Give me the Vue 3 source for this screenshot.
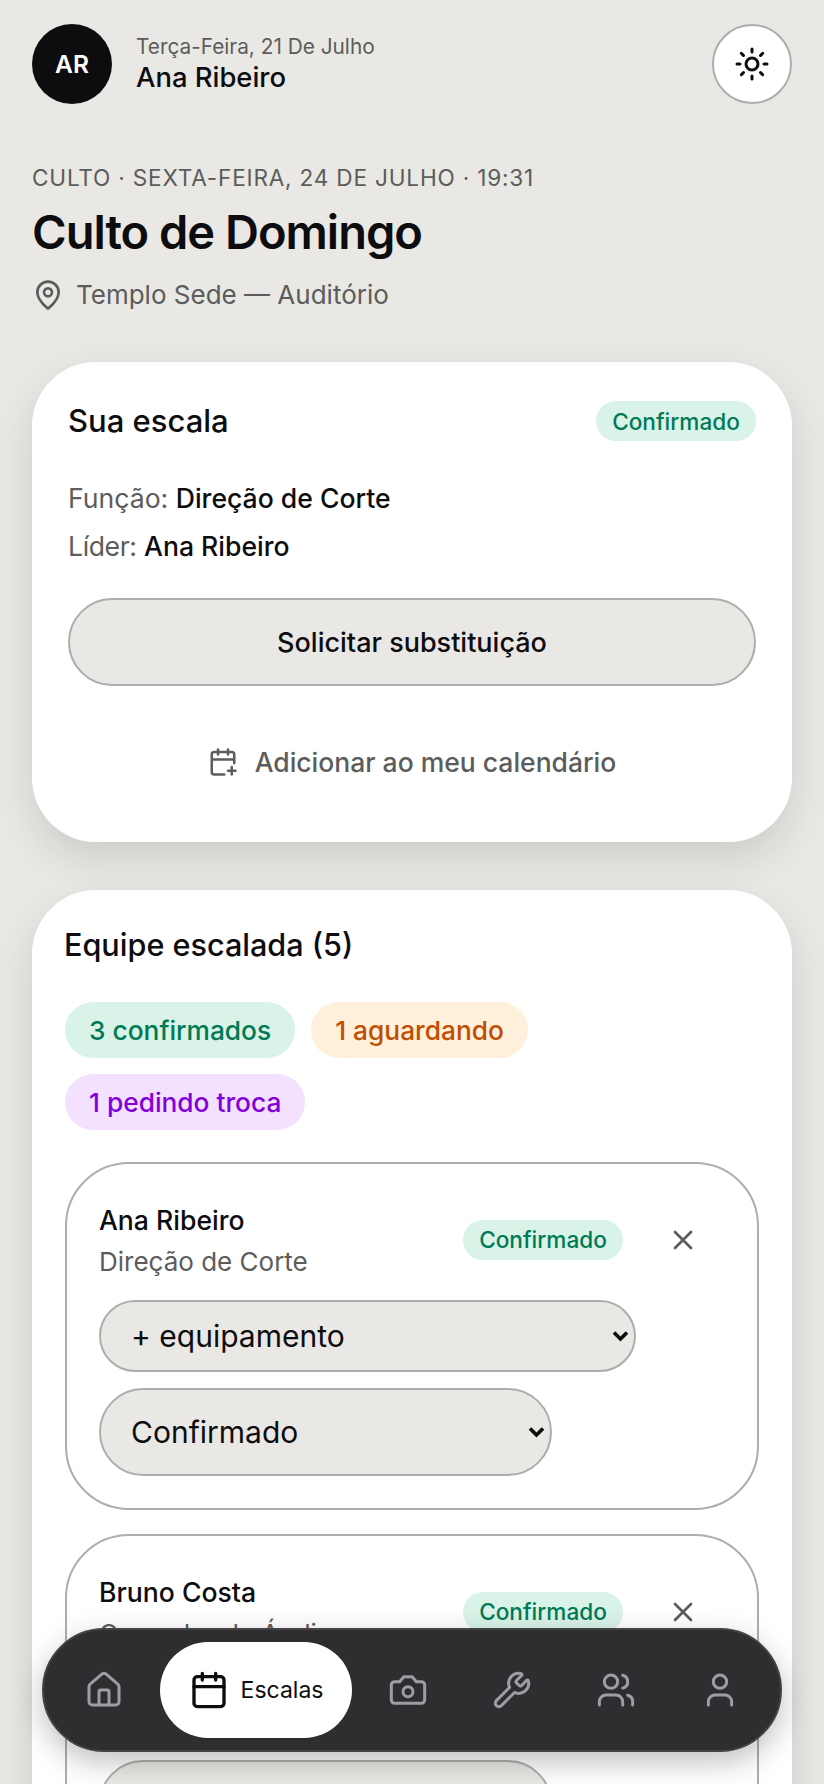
<script setup>
const team = [
  { name: 'Ana Ribeiro', role: 'Direção de Corte' },
  { name: 'Bruno Costa', role: 'Operador de Áudio' },
]
const navIcons = ['camera', 'wrench', 'users', 'user']
</script>

<template>
  <div class="page">
    <header class="top">
      <div class="who">
        <div class="avatar">AR</div>
        <div class="who-text">
          <div class="date">Terça-Feira, 21 De Julho</div>
          <div class="me">Ana Ribeiro</div>
        </div>
      </div>
      <button class="theme" type="button" aria-label="Tema">
        <svg class="ic sun" viewBox="0 0 24 24"><circle cx="12" cy="12" r="4"/><path d="M12 2v2M12 20v2m-7.07-17.07 1.41 1.41m11.32 11.32 1.41 1.41M2 12h2M20 12h2M6.34 17.66l-1.41 1.41M19.07 4.93l-1.41 1.41"/></svg>
      </button>
    </header>

    <section class="event">
      <div class="over">Culto · Sexta-Feira, 24 De Julho · 19:31</div>
      <h1>Culto de Domingo</h1>
      <div class="place">
        <svg class="ic pin" viewBox="0 0 24 24"><path d="M20 10c0 4.993-5.539 10.193-7.399 11.799a1 1 0 0 1-1.202 0C9.539 20.193 4 14.993 4 10a8 8 0 0 1 16 0"/><circle cx="12" cy="10" r="3"/></svg>
        <span>Templo Sede — Auditório</span>
      </div>
    </section>

    <section class="card mine">
      <div class="mine-head">
        <h2>Sua escala</h2>
        <span class="badge">Confirmado</span>
      </div>
      <p class="line first"><span>Função:</span> <b>Direção de Corte</b></p>
      <p class="line second"><span>Líder:</span> <b>Ana Ribeiro</b></p>
      <button class="swap" type="button">Solicitar substituição</button>
      <a class="addcal">
        <svg class="ic calplus" viewBox="0 0 24 24"><path d="M8 2v4M16 2v4M21 13V6a2 2 0 0 0-2-2H5a2 2 0 0 0-2 2v14a2 2 0 0 0 2 2h8M3 10h18M16 19h6M19 16v6"/></svg>
        <span>Adicionar ao meu calendário</span>
      </a>
    </section>

    <section class="card crew">
      <h2>Equipe escalada (5)</h2>
      <div class="pills">
        <span class="pill green">3 confirmados</span>
        <span class="pill orange">1 aguardando</span>
        <span class="pill purple">1 pedindo troca</span>
      </div>
      <div class="list">
        <article v-for="m in team" :key="m.name" class="member">
          <div class="m-head">
            <div class="m-id">
              <div class="m-name">{{ m.name }}</div>
              <div class="m-role">{{ m.role }}</div>
            </div>
            <span class="badge small">Confirmado</span>
            <button class="close" type="button" aria-label="Remover">
              <svg class="ic x" viewBox="0 0 24 24"><path d="M18 6 6 18M6 6l12 12"/></svg>
            </button>
          </div>
          <div class="selwrap gear">
            <select class="sel"><option>+ equipamento</option></select>
            <svg class="chev" viewBox="0 0 17 12"><path d="M2 2.5l6.5 6.5L15 2.5"/></svg>
          </div>
          <div class="selwrap status">
            <select class="sel"><option>Confirmado</option><option>Aguardando</option><option>Pedindo troca</option></select>
            <svg class="chev" viewBox="0 0 17 12"><path d="M2 2.5l6.5 6.5L15 2.5"/></svg>
          </div>
        </article>
      </div>
    </section>

    <nav class="nav">
      <a class="tab">
        <svg class="ic nv" viewBox="0 0 24 24"><path d="M15 21v-8a1 1 0 0 0-1-1h-4a1 1 0 0 0-1 1v8"/><path d="M3 10a2 2 0 0 1 .709-1.528l7-5.999a2 2 0 0 1 2.582 0l7 5.999A2 2 0 0 1 21 10v9a2 2 0 0 1-2 2H5a2 2 0 0 1-2-2z"/></svg>
      </a>
      <a class="tab active">
        <svg class="ic nv" viewBox="0 0 24 24"><path d="M8 2v4M16 2v4"/><rect x="3" y="4" width="18" height="18" rx="2"/><path d="M3 10h18"/></svg>
        <span>Escalas</span>
      </a>
      <a v-for="n in navIcons" :key="n" class="tab">
        <svg class="ic nv" viewBox="0 0 24 24">
          <template v-if="n === 'camera'"><path d="M14.5 4h-5L7 7H4a2 2 0 0 0-2 2v9a2 2 0 0 0 2 2h16a2 2 0 0 0 2-2V9a2 2 0 0 0-2-2h-3l-2.5-3z"/><circle cx="12" cy="13" r="3"/></template>
          <template v-else-if="n === 'wrench'"><path d="M14.7 6.3a1 1 0 0 0 0 1.4l1.6 1.6a1 1 0 0 0 1.4 0l3.106-3.105c.32-.322.863-.22.983.218a6 6 0 0 1-8.259 7.057l-7.91 7.91a1 1 0 0 1-2.999-3l7.91-7.91a6 6 0 0 1 7.057-8.259c.438.12.54.662.219.984z"/></template>
          <template v-else-if="n === 'users'"><path d="M16 21v-2a4 4 0 0 0-4-4H6a4 4 0 0 0-4 4v2"/><circle cx="9" cy="7" r="4"/><path d="M22 21v-2a4 4 0 0 0-3-3.87M16 3.13a4 4 0 0 1 0 7.75"/></template>
          <template v-else><path d="M19 21v-2a4 4 0 0 0-4-4H9a4 4 0 0 0-4 4v2"/><circle cx="12" cy="7" r="4"/></template>
        </svg>
      </a>
    </nav>
  </div>
</template>

<style>
html, body { margin: 0; height: 100%; overflow: hidden; background: #e9e8e4; }
</style>

<style scoped>
* { box-sizing: border-box; }
.page {
  position: relative;
  height: 1784px;
  overflow: hidden;
  padding: 24px 32px 0;
  background: #e9e8e4;
  color: #0d0d0f;
  font-family: Inter, "Liberation Sans", sans-serif;
}
.ic { fill: none; stroke: currentColor; stroke-width: 2; stroke-linecap: round; stroke-linejoin: round; flex: none; display: block; }

.top { display: flex; justify-content: space-between; align-items: center; }
.who { display: flex; align-items: center; gap: 24px; }
.avatar {
  width: 80px; height: 80px; border-radius: 50%;
  background: #0d0d0f; color: #fff;
  display: flex; align-items: center; justify-content: center;
  font-size: 24.5px; font-weight: 600;
}
.date { font-size: 20.8px; line-height: 28px; color: #5c5c5c; margin-top: -2px; }
.me { font-size: 27.4px; line-height: 34px; font-weight: 500; margin-top: -1px; }
.theme {
  width: 80px; height: 80px; border-radius: 50%;
  background: #fff; border: 2px solid #adadad; padding: 0;
  display: flex; align-items: center; justify-content: center; color: #0d0d0f;
}
.sun { width: 36px; height: 36px; }

.event { margin-top: 60px; }
.over { font-size: 22.6px; line-height: 28px; letter-spacing: 0.8px; text-transform: uppercase; color: #5c5c5c; font-weight: 400; }
h1 { margin: 12px 0 0; font-size: 47px; line-height: 56px; font-weight: 600; letter-spacing: -1px; }
.place { display: flex; align-items: center; gap: 12px; margin-top: 17px; font-size: 26px; line-height: 36px; color: #5c5c5c; }
.pin { width: 32px; height: 32px; }

.card { background: #fff; border-radius: 64px; box-shadow: 0 16px 40px rgba(0, 0, 0, 0.12); }
.mine { margin-top: 49px; height: 480px; padding: 39px 36px 0; }
.mine-head { display: flex; justify-content: space-between; align-items: center; }
h2 { margin: 0; font-size: 31px; line-height: 40px; font-weight: 500; }
.crew h2 { font-size: 30.6px; }
.badge {
  display: inline-flex; align-items: center; justify-content: center; height: 40px; width: 160px;
  border-radius: 20px; background: #d9f3e9; color: #007a55; font-size: 22.6px; font-weight: 500;
}
.badge.small { margin-top: -2px; }
.line { margin: 0; font-size: 26.6px; line-height: 48px; }
.line.first { margin-top: 33px; }
.line span { color: #5c5c5c; }
.line b { font-weight: 500; }
.line.second span { letter-spacing: -0.4px; }
.swap {
  display: block; width: 100%; height: 88px; margin-top: 28px;
  background: #e9e8e4; border: 2px solid #adadad; border-radius: 44px;
  color: #0d0d0f; font: inherit; font-size: 27px; font-weight: 500;
}
.addcal { display: flex; align-items: center; justify-content: center; gap: 17px; height: 88px; margin-top: 32px; color: #5c5c5c; font-size: 26.5px; font-weight: 500; }
.calplus { width: 30px; height: 30px; }

.crew { margin-top: 48px; padding: 35px 33px 0 33px; height: 1200px; }
.crew h2 { margin-left: -1px; }
.pills { display: flex; flex-wrap: wrap; gap: 16px; margin-top: 37px; }
.pill { display: inline-flex; align-items: center; height: 56px; padding: 0 24px; border-radius: 28px; font-size: 26.3px; font-weight: 500; }
.green { background: #d9f3e9; color: #007a55; }
.orange { background: #fff0dc; color: #c04f00; }
.purple { background: #f3e1ff; color: #8200db; }

.list { display: flex; flex-direction: column; gap: 24px; margin-top: 32px; }
.member { border: 2px solid #adadad; border-radius: 64px; padding: 37px 32px 32px; display: flex; flex-direction: column; align-items: flex-start; }
.m-head { display: flex; align-items: center; width: 100%; }
.m-id { flex: 1; min-width: 0; }
.m-name { font-size: 26.6px; line-height: 38px; font-weight: 500; }
.m-role { font-size: 26px; line-height: 36px; color: #5c5c5c; margin-top: 5px; }
.close { width: 60px; height: 60px; margin: -2px 12px 0 30px; padding: 0; border: 0; background: none; color: #5c5c5c; display: flex; align-items: center; justify-content: center; }
.x { width: 32px; height: 32px; }

.selwrap { position: relative; }
.sel {
  appearance: none; -webkit-appearance: none;
  display: block; width: 100%; height: 100%;
  background: #e9e8e4; border: 2px solid #adadad; border-radius: 44px; color: #0d0d0f;
  font-family: inherit; font-size: 30px; padding: 0 30px 0 30px;
}
.chev { position: absolute; right: 7.5px; top: 50%; width: 17px; height: 12px; margin-top: -6px; fill: none; stroke: #0d0d0f; stroke-width: 3.6; pointer-events: none; }
.gear { width: 537px; height: 72px; margin-top: 20px; }
.status { width: 453px; height: 88px; margin-top: 16px; }

.nav {
  position: absolute; left: 42px; top: 1628px; width: 740px; height: 124px;
  display: flex; gap: 8px; padding: 12px;
  background: #2e2e30; border: 2px solid #434346; border-radius: 62px;
  box-shadow: 0 10px 30px rgba(0, 0, 0, 0.25);
}
.tab { width: 96px; height: 96px; display: flex; align-items: center; justify-content: center; color: #9d9da6; border-radius: 48px; }
.tab.active { width: 192px; background: #fff; color: #0d0d0f; gap: 12px; font-size: 23px; font-weight: 400; }
.nv { width: 40px; height: 40px; stroke-width: 1.8; }
.tab.active .nv { stroke-width: 2; }
</style>
